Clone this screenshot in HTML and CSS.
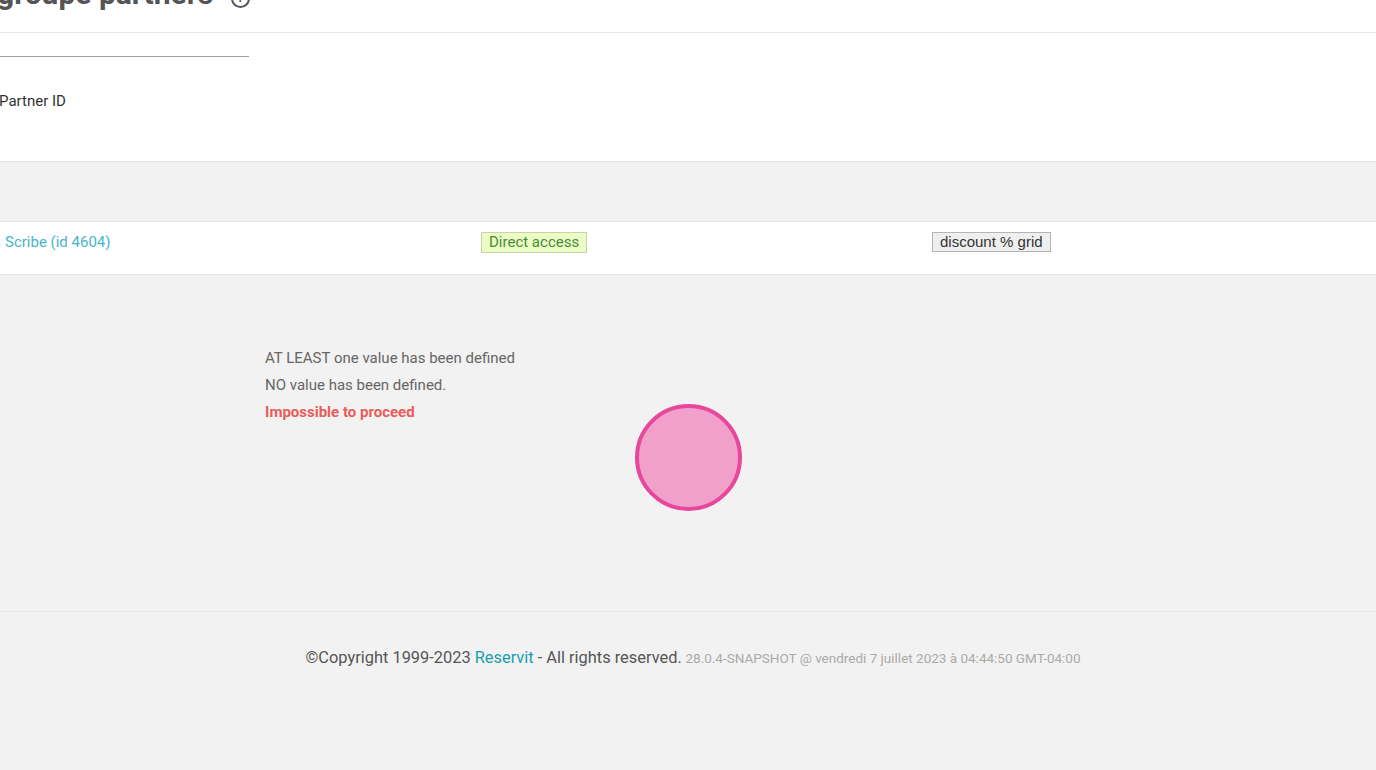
FILE: index.html
```html
<!DOCTYPE html>
<html lang="fr">
<head>
    <meta charset="UTF-8">
    <meta name="viewport" content="width=device-width, initial-scale=1.0">
    <title>Groupe partners</title>
    <link rel="stylesheet" href="styles.css">
</head>
<body>
    <div class="page-header">
        <h1 class="page-title">groupe partners <span class="info-icon">i</span></h1>
    </div>

    <div class="filter-panel">
        <div class="search-line"></div>
        <label class="field-label">Partner ID</label>
    </div>

    <div class="spacer-band"></div>

    <div class="partner-row">
        <div class="cell"><a href="#" class="partner-link">Scribe (id 4604)</a></div>
        <div class="cell"><span class="badge-access">Direct access</span></div>
        <div class="cell"><button class="grid-button">discount % grid</button></div>
    </div>

    <div class="message-area">
        <div class="messages">
            <p>AT LEAST one value has been defined</p>
            <p>NO value has been defined.</p>
            <p class="error">Impossible to proceed</p>
        </div>
        <div class="click-marker"></div>
    </div>

    <footer class="footer">
        <span class="copyright">©Copyright 1999-2023 <a href="#">Reservit</a> - All rights reserved.</span>
        <span class="version">28.0.4-SNAPSHOT @ vendredi 7 juillet 2023 à 04:44:50 GMT-04:00</span>
    </footer>
</body>
</html>
```

FILE: styles.css
```css
/* Page */
body {
    font-family: Roboto, "Liberation Sans", Arial, sans-serif;
    margin: 0;
    padding: 0;
    background-color: #f2f2f2;
    color: #333;
    font-size: 15px;
    height: 770px;
    overflow: hidden;
}

.page-header {
    background: #fff;
    height: 32px;
    border-bottom: 1px solid #e8e8e8;
    overflow: hidden;
}

.page-title {
    margin: -21px 0 0 -3px;
    font-size: 30px;
    line-height: 30px;
    font-weight: 700;
    color: #555;
    white-space: nowrap;
}

.info-icon {
    display: inline-block;
    width: 15px;
    height: 15px;
    margin-left: 10px;
    border: 2px solid #555;
    border-radius: 50%;
    font-size: 11px;
    line-height: 15px;
    text-align: center;
    vertical-align: 2px;
}

.filter-panel {
    background: #fff;
    height: 129px;
    border-bottom: 1px solid #e6e6e6;
    padding-top: 23px;
    box-sizing: border-box;
}

.search-line {
    width: 249px;
    border-bottom: 1px solid #9e9e9e;
}

.field-label {
    display: block;
    margin-top: 35px;
    margin-left: -1px;
    font-size: 15px;
    color: #333;
}

.spacer-band {
    height: 59px;
}

.partner-row {
    display: grid;
    grid-template-columns: 476px 451px 1fr;
    align-items: start;
    background: #fff;
    height: 54px;
    box-sizing: border-box;
    padding: 10px 0 0 5px;
    border-top: 1px solid #e6e6e6;
    border-bottom: 1px solid #e6e6e6;
}

.cell {
    line-height: 21px;
}

.partner-link {
    color: #4ab5c6;
    text-decoration: none;
    font-size: 15px;
}

.badge-access {
    display: inline-block;
    background: #ebfcc4;
    border: 1px solid #c6d6a3;
    color: #4a8a3c;
    padding: 1px 7px;
    font-size: 15px;
    line-height: 17px;
}

.grid-button {
    font-family: "Liberation Sans", Arial, sans-serif;
    font-size: 15px;
    color: #333;
    background: #efefef;
    border: 1px solid #b5b5b5;
    border-radius: 0;
    padding: 0 7px 1px;
    line-height: 17px;
    vertical-align: top;
}

.message-area {
    position: relative;
    height: 336px;
    border-bottom: 1px solid #e6e6e6;
}

.messages {
    padding: 70px 0 0 265px;
}

.messages p {
    margin: 0;
    line-height: 27px;
    color: #666;
}

.messages .error {
    color: #e95c5c;
    font-weight: 700;
}

.click-marker {
    position: absolute;
    left: 635px;
    top: 129px;
    width: 99px;
    height: 99px;
    border-radius: 50%;
    background: #f0a0c9;
    border: 4px solid #e8489b;
}

.footer {
    text-align: center;
    padding-top: 36px;
    padding-left: 10px;
}

.copyright {
    font-size: 16.4px;
    color: #555;
}

.copyright a {
    color: #1a9eaf;
    text-decoration: none;
}

.version {
    font-size: 13.5px;
    color: #aaa;
}
```
